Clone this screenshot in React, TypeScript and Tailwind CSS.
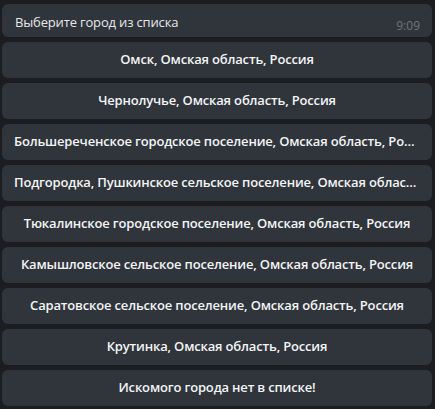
import React from "react";

const cities = [
  "Омск, Омская область, Россия",
  "Чернолучье, Омская область, Россия",
  "Большереченское городское поселение, Омская область, Россия",
  "Подгородка, Пушкинское сельское поселение, Омская область, Россия",
  "Тюкалинское городское поселение, Омская область, Россия",
  "Камышловское сельское поселение, Омская область, Россия",
  "Саратовское сельское поселение, Омская область, Россия",
  "Крутинка, Омская область, Россия",
  "Искомого города нет в списке!",
];

export default function App() {
  return (
    <div
      className="w-[435px] h-[409px] overflow-hidden bg-[#1b1d21] pl-[2px] pr-[3px] pt-[4px]"
      style={{ fontFamily: "'Open Sans', 'Noto Sans', sans-serif" }}
    >
      {/* Message bubble */}
      <div className="relative h-[33px] rounded-[6px] bg-[#30343b] pl-[13px] pt-[5px]">
        <span className="text-[13px] leading-[18px] tracking-[-0.16px] text-[#e6e8eb]">Выберите город из списка</span>
        <span className="absolute right-[12px] bottom-[3px] text-[12px] leading-[16px] text-[#6b7682]">9:09</span>
      </div>

      {/* Inline keyboard */}
      <div className="mt-[5px] flex flex-col gap-[5px]">
        {cities.map((c) => (
          <button
            key={c}
            className="h-[36px] w-full rounded-[6px] bg-[#30343b] px-[12px] text-center text-[13px] font-semibold tracking-[-0.17px] text-[#f3f4f6] truncate"
          >
            {c}
          </button>
        ))}
      </div>
    </div>
  );
}
